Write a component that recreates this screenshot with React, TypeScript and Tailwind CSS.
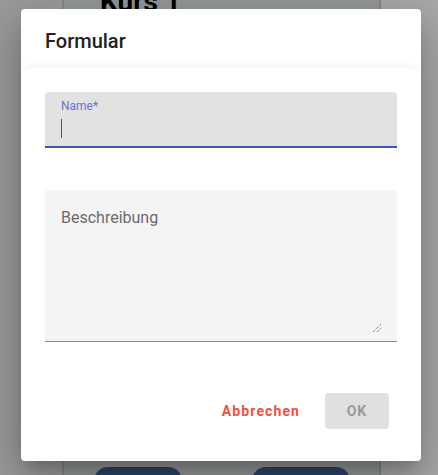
import React from "react";

export default function App() {
  return (
    <div
      className="relative w-[438px] h-[475px] overflow-hidden bg-[#9d9d9d]"
      style={{ fontFamily: "Roboto, 'Liberation Sans', sans-serif" }}
    >
      {/* Page behind the backdrop */}
      <div className="flex h-full bg-gradient-to-r from-[#9a9a9a] to-[#a9a9a9]">
        <div className="ml-[62px] w-[319px] h-full flex flex-col justify-between border-x-2 border-[#858888] bg-[#959898]">
          <div className="-mt-[14px] pl-[36px] text-[28px] font-bold text-black leading-[32px]">Kurs 1</div>
          <div className="flex gap-[70px] pl-[30px] -mb-[20px]">
            <div className="w-[88px] h-[28px] rounded-full bg-[#2c4468]" />
            <div className="w-[98px] h-[28px] rounded-full bg-[#2c4468]" />
          </div>
        </div>
      </div>

      {/* Dialog */}
      <div className="absolute left-[21px] top-[9px] w-[400px] h-[452px] flex flex-col bg-white rounded-[4px] shadow-[0_11px_15px_-7px_rgba(0,0,0,0.2),0_24px_38px_3px_rgba(0,0,0,0.14),0_9px_46px_8px_rgba(0,0,0,0.12)]">
        <div className="px-6 pt-4 pb-[11px] text-[20px] font-medium leading-8 text-[#222]">Formular</div>

        <div className="flex-1 flex flex-col px-6 pt-6 rounded-t-[12px] shadow-[0_-6px_8px_-4px_rgba(0,0,0,0.05)]">
          {/* Name field */}
          <div className="h-[56px] flex flex-col rounded-t-[4px] bg-[#e2e2e2] border-b-2 border-[#3f51b5] px-4 pt-[6px]">
            <span className="text-[12px] leading-4 text-[#6a74c9]">Name*</span>
            <span className="mt-[5px] w-[1px] h-[19px] bg-[#3f51b5]" />
          </div>

          {/* Beschreibung */}
          <div className="mt-[42px] h-[152px] relative rounded-t-[4px] bg-[#f4f4f4] border-b border-[#8a8a8a] px-4 pt-[16px]">
            <span className="text-[16px] leading-6 text-[#6b6b6b]">Beschreibung</span>
            <svg className="absolute right-[15px] bottom-[8px]" width="10" height="10" viewBox="0 0 10 10">
              <path d="M1 9 L9 1 M5 9 L9 5" stroke="#555" strokeWidth="1" strokeDasharray="1 1" />
            </svg>
          </div>

          <div className="flex-1" />

          {/* Actions */}
          <div className="flex items-center justify-end gap-[25px] mr-2 pb-[32px]">
            <button className="text-[14px] font-bold tracking-[1.1px] text-[#f0513f]">Abbrechen</button>
            <button className="w-[64px] h-[36px] rounded-[4px] bg-[#e0e0e0] text-[14px] font-bold tracking-[1px] text-[#9a9a9a]">
              OK
            </button>
          </div>
        </div>
      </div>
    </div>
  );
}
